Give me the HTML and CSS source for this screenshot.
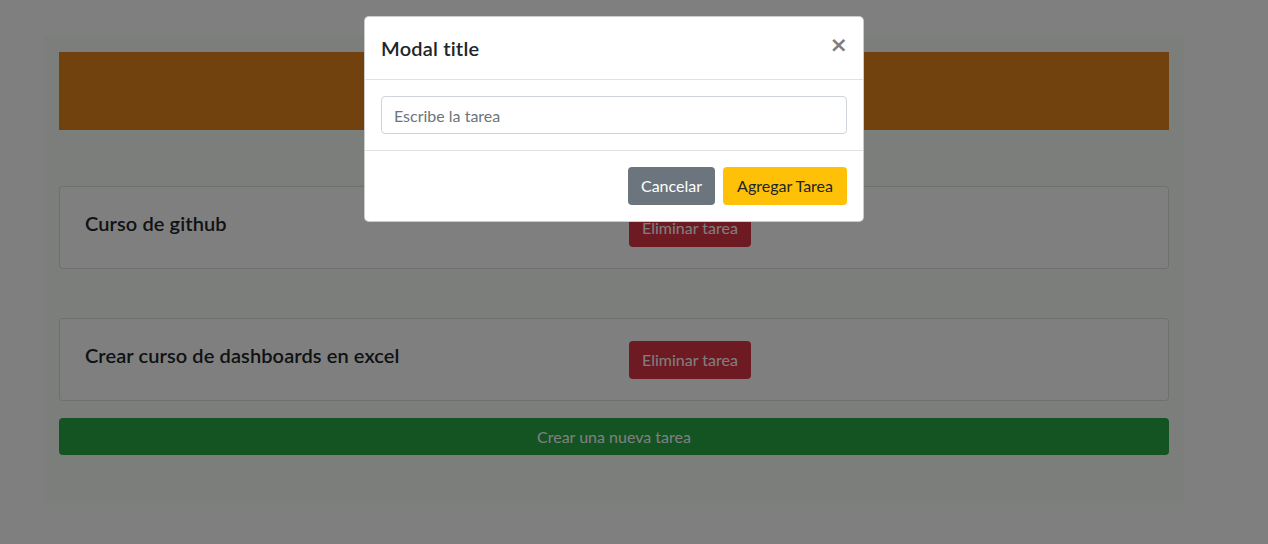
FILE: index.html
```html
<!DOCTYPE html>
<html lang="es">
<head>
<meta charset="utf-8">
<title>Tareas</title>
<link rel="stylesheet" href="styles.css">
</head>
<body>
<div class="page">
  <main class="container">
    <div class="banner"></div>
    <div class="card card-first">
      <div class="card-row">
        <div class="col"><h5 class="task-title">Curso de github</h5></div>
        <div class="col"><button class="btn btn-danger">Eliminar tarea</button></div>
      </div>
    </div>
    <div class="card card-second">
      <div class="card-row">
        <div class="col"><h5 class="task-title">Crear curso de dashboards en excel</h5></div>
        <div class="col"><button class="btn btn-danger">Eliminar tarea</button></div>
      </div>
    </div>
    <button class="btn btn-success btn-block">Crear una nueva tarea</button>
  </main>
</div>
<div class="backdrop"></div>
<div class="modal">
  <div class="modal-header">
    <h5 class="modal-title">Modal title</h5>
    <button class="close" aria-label="Close">&times;</button>
  </div>
  <div class="modal-body">
    <input class="form-control" type="text" placeholder="Escribe la tarea">
  </div>
  <div class="modal-footer">
    <button class="btn btn-secondary">Cancelar</button>
    <button class="btn btn-warning">Agregar Tarea</button>
  </div>
</div>
</body>
</html>
```
FILE: styles.css
```css
* { box-sizing: border-box; }
html, body { margin: 0; padding: 0; }
body {
  background: #fff;
  font-family: "Lato", "Noto Sans", sans-serif;
  font-size: 16px;
  line-height: 1.5;
  color: #212529;
  height: 544px;
  overflow: hidden;
  position: relative;
}
.page { width: 1228px; }
.container {
  width: 1140px;
  margin: 36px auto 0;
  padding: 16px 15px 48px;
  background: #f9fcf9;
}
.banner {
  height: 78px;
  background: #e4841c;
}
.card {
  border: 1px solid rgba(0,0,0,.125);
  border-radius: 4px;
  background: #fff;
  padding: 22px 10px 21px;
}
.card-first { margin-top: 56px; }
.card-second { margin-top: 49px; margin-bottom: 17px; }
.card-row { display: grid; grid-template-columns: 1fr 1fr; }
.col { padding: 0 15px; }
.task-title {
  margin: 2px 0 0;
  font-size: 20px;
  font-weight: 600;
  line-height: 1.2;
  letter-spacing: 0.1px;
}
.btn {
  font-family: inherit;
  font-size: 16px;
  line-height: 1.5;
  padding: 6px 12px;
  border: 1px solid transparent;
  border-radius: 4px;
  cursor: pointer;
}
.btn-danger { background: #dc3545; color: #fff; }
.btn-success { background: #28a745; color: #fff; height: 37px; padding-top: 5px; padding-bottom: 5px; }
.btn-secondary { background: #6c757d; color: #fff; }
.btn-warning { background: #ffc107; color: #212529; padding-left: 13px; padding-right: 13px; }
.btn-block { display: block; width: 100%; }
.backdrop {
  position: absolute;
  inset: 0;
  background: rgba(0,0,0,.5);
}
.modal {
  position: absolute;
  left: 364px;
  top: 16px;
  width: 500px;
  background: #fff;
  border: 1px solid rgba(0,0,0,.2);
  border-radius: 5px;
}
.modal-header {
  display: flex;
  align-items: flex-start;
  justify-content: space-between;
  padding: 16px;
  border-bottom: 1px solid #dee2e6;
}
.modal-title {
  margin: 0;
  font-size: 20px;
  font-weight: 600;
  line-height: 1.5;
  letter-spacing: 0.2px;
}
.close {
  background: none;
  border: 0;
  padding: 17px 15px 15px 16px;
  margin: -16px -16px -16px auto;
  font-family: "DejaVu Sans", sans-serif;
  font-size: 22px;
  font-weight: 700;
  line-height: 1;
  color: #000;
  opacity: .5;
}
.modal-body { padding: 16px; }
.form-control {
  display: block;
  width: 100%;
  height: 38px;
  padding: 6px 12px;
  font-family: inherit;
  font-size: 16px;
  color: #495057;
  border: 1px solid #ced4da;
  border-radius: 4px;
  background: #fff;
}
.form-control::placeholder { color: #6c757d; }
.modal-footer {
  display: flex;
  justify-content: flex-end;
  padding: 12px;
  border-top: 1px solid #dee2e6;
}
.modal-footer .btn { margin: 4px; }
```
